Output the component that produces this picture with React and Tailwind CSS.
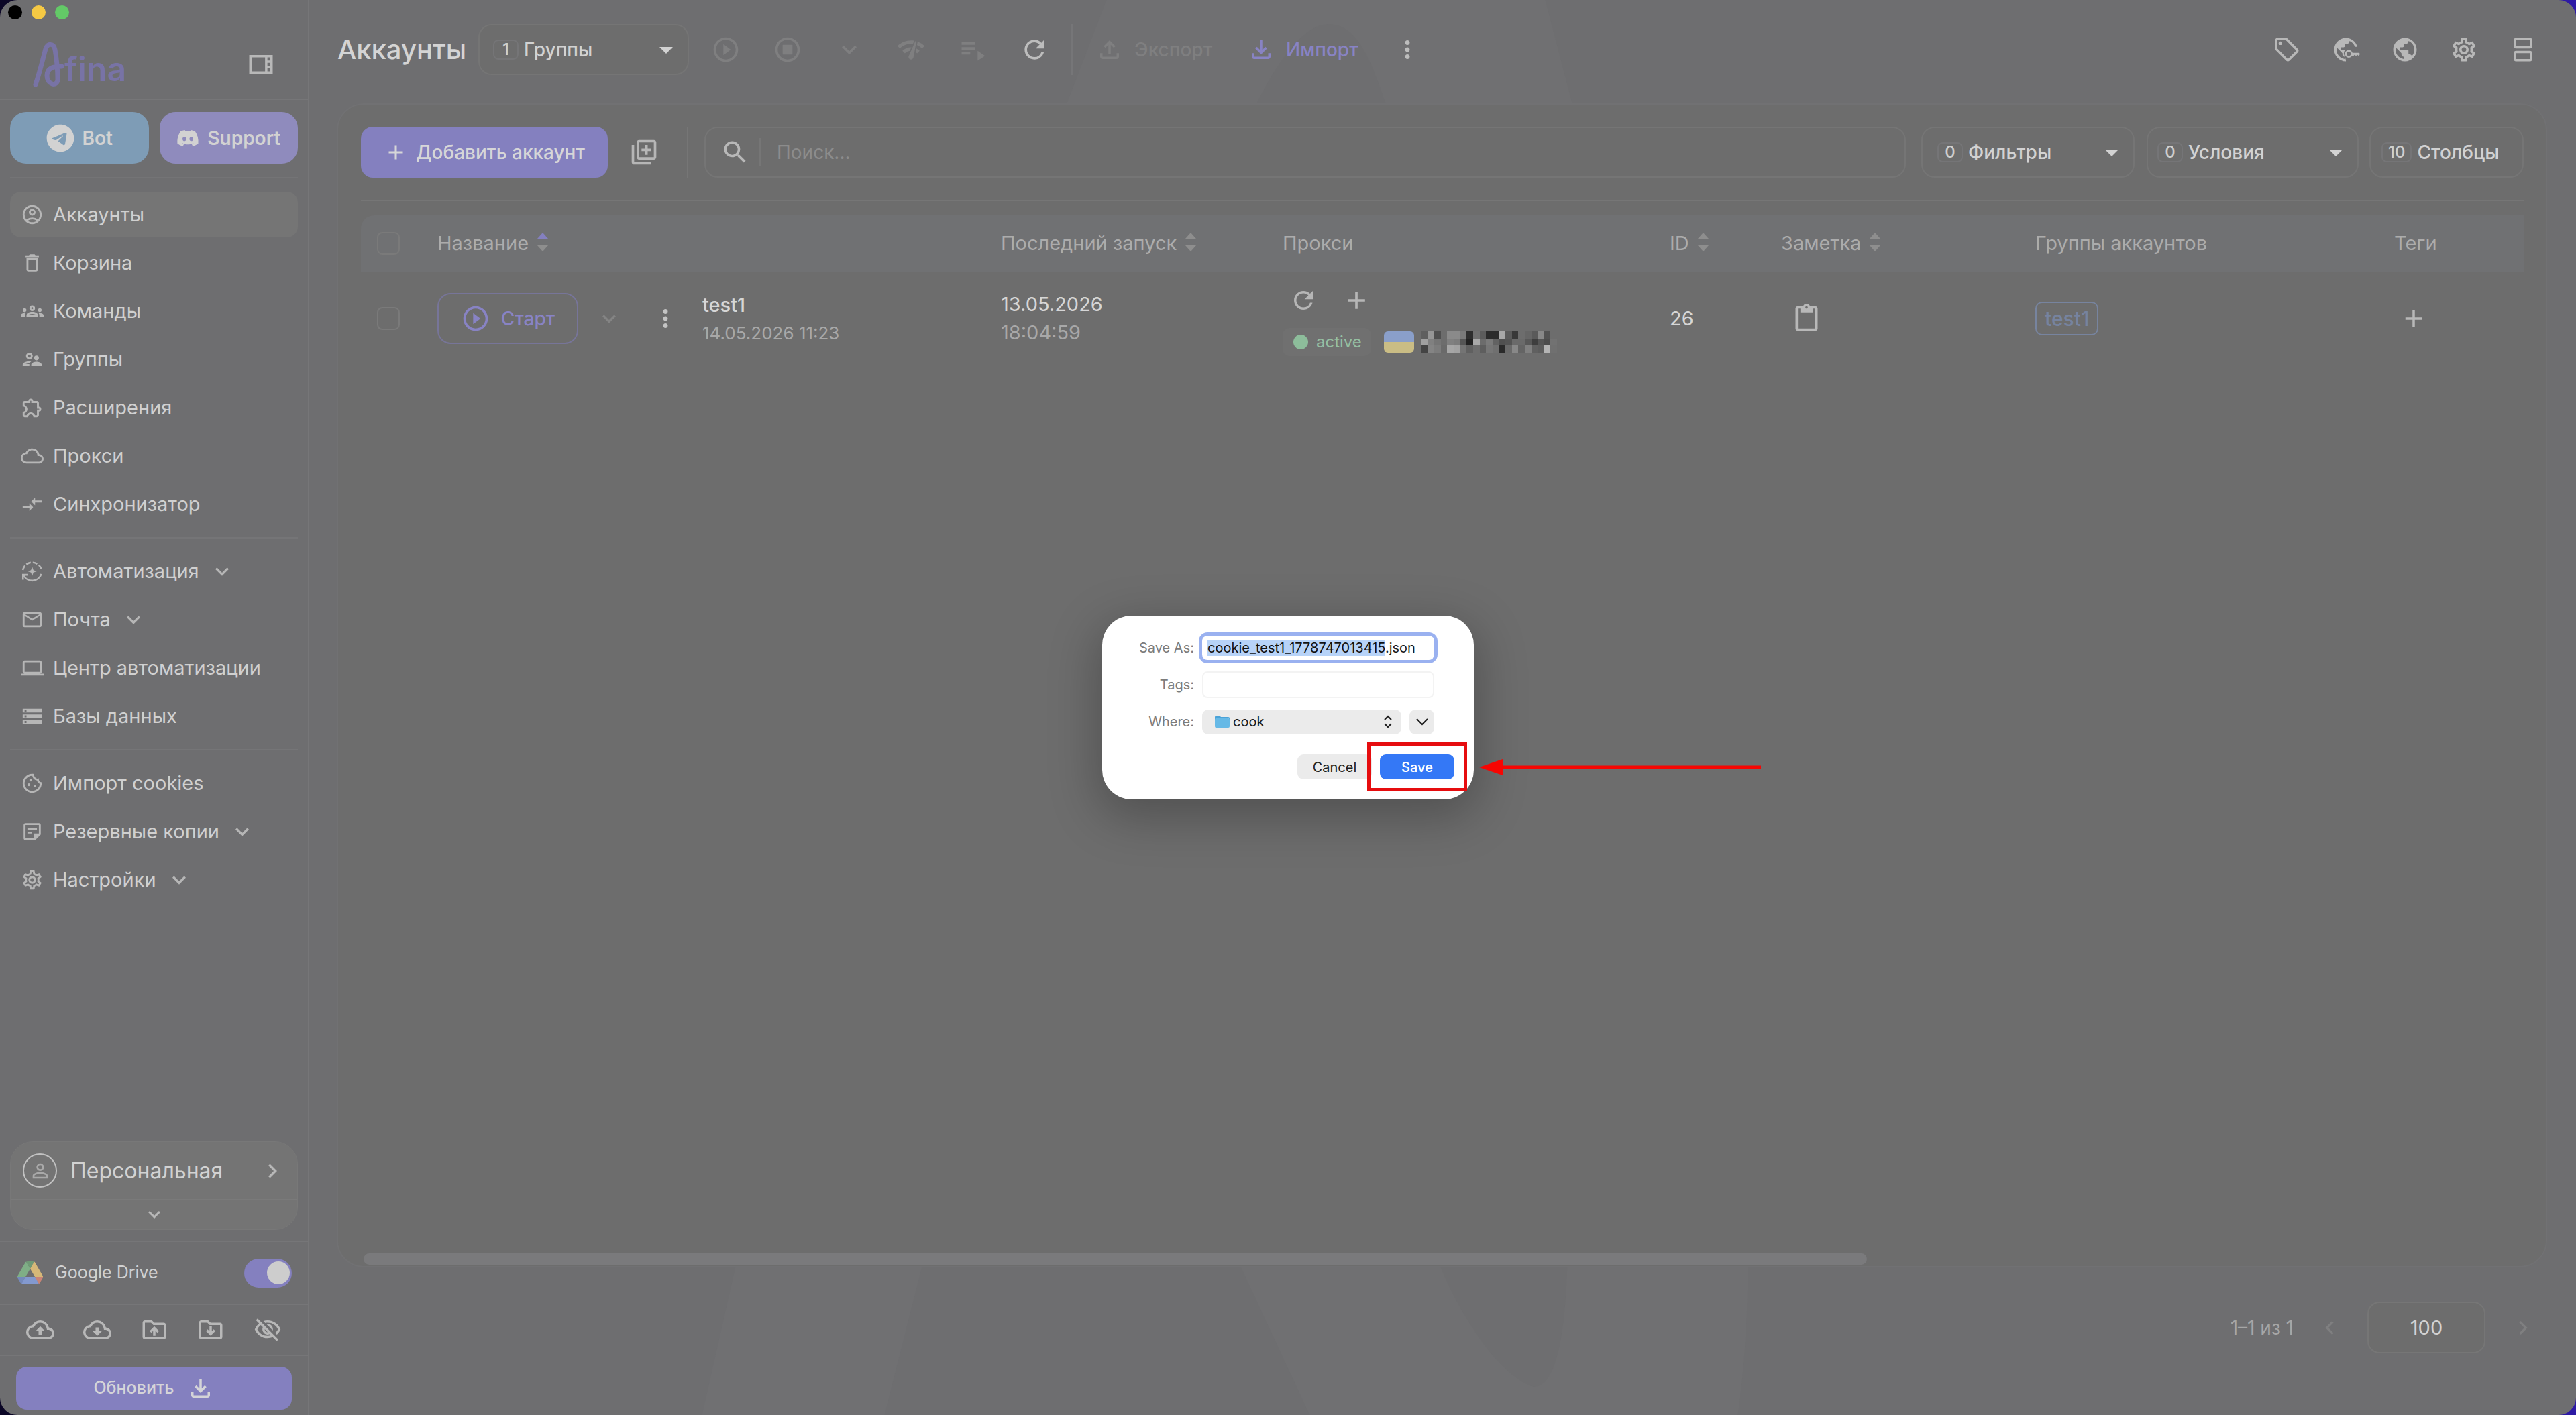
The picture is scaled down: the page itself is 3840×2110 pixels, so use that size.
import React, { useEffect, useRef } from "react";
import {
  MdOutlineAccountCircle, MdDeleteOutline, MdOutlineGroups, MdOutlineSupervisorAccount, MdOutlineExtension,
  MdCloudQueue, MdOutlineCompareArrows, MdMailOutline, MdOutlineLaptop, MdStorage, MdOutlineCookie,
  MdOutlineStickyNote2, MdOutlineSettings, MdOutlineCloudUpload, MdOutlineCloudDownload,
  MdOutlineDriveFolderUpload, MdOutlineVisibilityOff, MdPublic, MdOutlineSell, MdOutlineSplitscreen,
  MdPlayCircleOutline, MdOutlineStopCircle, MdNetworkCheck, MdPlaylistPlay, MdRefresh, MdMoreVert,
  MdOutlineLibraryAdd, MdSearch, MdAdd, MdContentPaste, MdExpandMore, MdKeyboardArrowRight,
  MdKeyboardArrowLeft, MdOutlineFileUpload, MdOutlineFileDownload, MdPersonOutline,
  MdOutlineViewSidebar, MdArrowDropDown,
} from "react-icons/md";
import { FaTelegram, FaDiscord } from "react-icons/fa6";

function AutomationIcon({ size }) {
  return (
    <svg width={size} height={size} viewBox="0 0 24 24" fill="none" stroke="currentColor" strokeWidth="1.8" aria-hidden="true">
      <path d="M2.2 10.6A10 10 0 0 1 21.8 10.6" strokeDasharray="5 2.1" />
      <path d="M21.6 14.8A10 10 0 0 1 3 16" />
      <path d="M7.4 15.6H2.3v5.2" />
      <path d="M12 7.2l1.3 3.5 3.5 1.3-3.5 1.3L12 16.8l-1.3-3.5L7.2 12l3.5-1.3z" fill="currentColor" stroke="none" />
    </svg>
  );
}

function FolderDownIcon({ size }) {
  return (
    <svg width={size} height={size} viewBox="0 0 24 24" fill="currentColor" aria-hidden="true">
      <path d="M20 6h-8l-2-2H4c-1.1 0-1.99.9-1.99 2L2 18c0 1.1.9 2 2 2h16c1.1 0 2-.9 2-2V8c0-1.1-.9-2-2-2zm0 12H4V6h5.17l2 2H20v10z" />
      <path d="M16 13l-1.41-1.41L13 13.17V9h-2v4.17l-1.59-1.58L8 13l4 4z" />
    </svg>
  );
}

function GlobeKeyIcon({ size }) {
  return (
    <svg width={size} height={size} viewBox="0 0 24 24" fill="currentColor" overflow="visible" aria-hidden="true">
      <mask id="globe-cut">
        <rect width="26" height="24" fill="#fff" />
        <path d="M12 24v-3.2L10.2 15.6a4.6 4.6 0 0 1 3-4.4L18.6 9.6H26V24z" fill="#000" />
      </mask>
      <path mask="url(#globe-cut)" d="M12 2C6.48 2 2 6.48 2 12s4.48 10 10 10 10-4.48 10-10S17.52 2 12 2zm-1 17.93c-3.95-.49-7-3.85-7-7.93 0-.62.08-1.21.21-1.79L9 15v1c0 1.1.9 2 2 2v1.93zm6.9-2.54c-.26-.81-1-1.39-1.9-1.39h-1v-3c0-.55-.45-1-1-1H8v-2h2c.55 0 1-.45 1-1V7h2c1.1 0 2-.9 2-2v-.41c2.93 1.19 5 4.06 5 7.41 0 2.08-.8 3.97-2.1 5.39z" />
      <circle cx="14.4" cy="15.6" r="2.5" fill="none" stroke="currentColor" strokeWidth="1.5" />
      <path d="M17 14.7h6.2l.9 1-1.3 1.6-1.1-1-1.1 1.1-1.1-1.1-.9.9H17z" />
    </svg>
  );
}

function DriveIcon() {
  return (
    <svg className="w-[38px]" viewBox="0 0 87.3 78" aria-hidden="true">
      <path fill="#7489bb" d="m6.6 66.85 3.85 6.65c.8 1.4 1.95 2.5 3.3 3.3l13.75-23.8h-27.5c0 1.55.4 3.1 1.2 4.5z" />
      <path fill="#7fae86" d="m43.65 25-13.75-23.8c-1.35.8-2.5 1.9-3.3 3.3l-25.4 44a9.06 9.06 0 0 0 -1.2 4.5h27.5z" />
      <path fill="#c98476" d="m73.55 76.8c1.35-.8 2.5-1.9 3.3-3.3l1.6-2.75 7.65-13.25c.8-1.4 1.2-2.95 1.2-4.5h-27.502l5.852 11.5z" />
      <path fill="#6f9a76" d="m43.65 25 13.75-23.8c-1.35-.8-2.9-1.2-4.5-1.2h-18.5c-1.6 0-3.15.45-4.5 1.2z" />
      <path fill="#8399cf" d="m59.8 53h-32.3l-13.75 23.8c1.35.8 2.9 1.2 4.5 1.2h50.8c1.6 0 3.15-.45 4.5-1.2z" />
      <path fill="#d6b878" d="m73.4 26.5-12.7-22c-.8-1.4-1.95-2.5-3.3-3.3l-13.75 23.8 16.15 28h27.45c0-1.55-.4-3.1-1.2-4.5z" />
    </svg>
  );
}

function FolderIcon() {
  return (
    <svg className="w-6" viewBox="0 0 24 20" aria-hidden="true">
      <path d="M1 3a2 2 0 0 1 2-2h5l2 2h11a2 2 0 0 1 2 2v3H1z" fill="#4ba3d8" />
      <rect x="2" y="4" width="20" height="3" fill="#d9f0fb" />
      <rect x="1" y="5" width="22" height="14" rx="2" fill="#66b9e6" />
    </svg>
  );
}

const navGroups = [
  [
    { label: "Аккаунты", Icon: MdOutlineAccountCircle, active: true },
    { label: "Корзина", Icon: MdDeleteOutline },
    { label: "Команды", Icon: MdOutlineGroups },
    { label: "Группы", Icon: MdOutlineSupervisorAccount },
    { label: "Расширения", Icon: MdOutlineExtension },
    { label: "Прокси", Icon: MdCloudQueue },
    { label: "Синхронизатор", Icon: MdOutlineCompareArrows },
  ],
  [
    { label: "Автоматизация", Icon: AutomationIcon, more: true },
    { label: "Почта", Icon: MdMailOutline, more: true },
    { label: "Центр автоматизации", Icon: MdOutlineLaptop },
    { label: "Базы данных", Icon: MdStorage },
  ],
  [
    { label: "Импорт cookies", Icon: MdOutlineCookie },
    { label: "Резервные копии", Icon: MdOutlineStickyNote2, more: true },
    { label: "Настройки", Icon: MdOutlineSettings, more: true },
  ],
];

function Sidebar() {
  return (
    <aside className="flex w-[461px] shrink-0 flex-col border-r-2 border-[#767678]">
      <div className="flex gap-3.5 px-3 pt-2">
        <span className="size-[21px] rounded-full bg-black" />
        <span className="size-[21px] rounded-full bg-[#f5c944]" />
        <span className="size-[21px] rounded-full bg-[#63c967]" />
      </div>
      <div className="flex h-[120px] items-center justify-between border-b-2 border-[#767678] pt-4 pr-[49px] pl-12">
        <a href="#" aria-label="Afina" className="flex items-end text-[#7873a6]">
          <svg className="h-[70px] w-12" viewBox="0 0 48 70" fill="none" stroke="currentColor" strokeWidth="7" strokeLinecap="round" strokeLinejoin="round" aria-hidden="true">
            <path d="M5 65C11 48 16 26 20 12C23 3 32 3 34 13C37 30 38 46 38 58C37 69 22 65 22 52C22 40 32 38 44 38" />
          </svg>
          <span className="text-[50px] leading-[56px] font-semibold">fina</span>
        </a>
        <button aria-label="Свернуть меню" className="text-[#b8b8b8]"><MdOutlineViewSidebar size={42} /></button>
      </div>
      <div className="mx-[15px] grid grid-cols-2 gap-4 border-b-2 border-[#747476] pt-[18px] pb-5 text-[28px] font-semibold text-[#d2d2d2]">
        <a href="#" className="flex h-[77px] items-center justify-center gap-3 rounded-[24px] bg-[#7e9cb6]">
          <FaTelegram size={42} />Bot
        </a>
        <a href="#" className="flex h-[77px] items-center justify-center gap-3 rounded-[24px] bg-[#8f8bbd]">
          <FaDiscord size={34} />Support
        </a>
      </div>
      <nav className="mx-[15px] mt-5 flex flex-col">
        {navGroups.map((group, i) => (
          <div key={i} className="mb-[15px] flex flex-col gap-1 border-[#757577] not-first:border-t-2 not-first:pt-[15px]">
            {group.map(({ label, Icon, active, more }) => (
              <a key={label} href="#" className={"flex h-[68px] items-center gap-3.5 rounded-[16px] pl-4 text-[29px] text-[#d0d0d0] " + (active ? "bg-[#757575]" : "")}>
                <span className="text-[#b6b6b6]"><Icon size={34} /></span>
                {label}
                {more && <MdExpandMore size={40} className="text-[#b6b6b6]" />}
              </a>
            ))}
          </div>
        ))}
      </nav>
      <div className="mx-[15px] mt-auto mb-4 rounded-[34px] border border-[#787878] bg-[#747474]">
        <button className="flex h-[86px] w-full items-center gap-5 border-b border-[#7a7a7a] pr-4 pl-[18px] text-[32px] text-[#d2d2d2]">
          <span className="grid size-[51px] place-items-center rounded-full border-2 border-[#c2c2c2] text-[#a9a9a9]"><MdPersonOutline size={34} /></span>
          Персональная
          <MdKeyboardArrowRight size={42} className="ml-auto text-[#b8b8b8]" />
        </button>
        <button aria-label="Показать ещё" className="grid h-[44px] w-full place-items-center text-[#b8b8b8]"><MdExpandMore size={36} /></button>
      </div>
      <label className="flex h-[94px] items-center gap-[18px] border-t-2 border-[#767678] pr-6 pl-[26px] text-[25px] text-[#d0d0d0]">
        <DriveIcon />
        Google Drive
        <input type="checkbox" defaultChecked className="peer sr-only" />
        <span className="ml-auto flex h-[43px] w-[71px] items-center justify-end rounded-full bg-[#8480bf] pr-[3px]">
          <span className="size-[34px] rounded-full bg-[#cdcdcd]" />
        </span>
      </label>
      <div className="flex h-[78px] items-center justify-between border-y-2 border-[#767678] px-[39px] text-[#b8b8b8]">
        <button aria-label="Загрузить в облако"><MdOutlineCloudUpload size={42} /></button>
        <button aria-label="Скачать из облака"><MdOutlineCloudDownload size={42} /></button>
        <button aria-label="Загрузить папку"><MdOutlineDriveFolderUpload size={42} /></button>
        <button aria-label="Скачать папку"><FolderDownIcon size={42} /></button>
        <button aria-label="Скрыть"><MdOutlineVisibilityOff size={42} /></button>
      </div>
      <button className="mx-6 mt-4 mb-2 flex h-[64px] items-center justify-center gap-[18px] rounded-[16px] bg-[#8480bf] text-[25px] font-medium text-[#d4d4d8]">
        Обновить<MdOutlineFileDownload size={42} />
      </button>
    </aside>
  );
}

function Badge({ children }) {
  return <span className="grid h-[30px] min-w-[38px] place-items-center rounded-[8px] border-2 border-[#757577] px-2 text-[24px] leading-none text-[#cfcfcf]">{children}</span>;
}

function Picker({ count, label, className }) {
  return (
    <label className={"relative flex h-[76px] items-center gap-2 rounded-[20px] border-2 border-[#757575] bg-[#6d6d6d] pr-2 text-[28px] font-medium text-[#d2d2d2] " + className}>
      <Badge>{count}</Badge>
      <select aria-label={label} className="min-w-0 flex-1 appearance-none bg-transparent outline-none">
        <option>{label}</option>
      </select>
      <MdArrowDropDown size={48} className="pointer-events-none" />
    </label>
  );
}

function TopBar() {
  return (
    <header className="relative flex items-center px-[42px] pt-9 pb-[42px] text-[28px] font-medium">
      <h1 className="mr-[18px] text-[40px] leading-none font-medium text-[#d4d4d4]">Аккаунты</h1>
      <Picker count="1" label="Группы" className="w-[314px] pl-5" />
      <div className="mx-[33px] flex gap-12 text-[#7f7f80]">
        <button aria-label="Запустить"><MdPlayCircleOutline size={44} /></button>
        <button aria-label="Остановить"><MdOutlineStopCircle size={44} /></button>
        <button aria-label="Ещё"><MdExpandMore size={44} /></button>
        <button aria-label="Проверить прокси"><MdNetworkCheck size={44} /></button>
        <button aria-label="Очередь"><MdPlaylistPlay size={44} /></button>
        <button aria-label="Обновить" className="text-[#bdbdbd]"><MdRefresh size={44} /></button>
      </div>
      <span className="h-[76px] w-0.5 bg-[#767678]" />
      <button className="ml-[34px] flex items-center gap-4 text-[#7f7f80]"><MdOutlineFileUpload size={42} />Экспорт</button>
      <button className="ml-[52px] flex items-center gap-4 text-[#8883c4]"><MdOutlineFileDownload size={42} />Импорт</button>
      <button aria-label="Меню" className="ml-[52px] text-[#bdbdbd]"><MdMoreVert size={42} /></button>
      <div className="mr-[16px] ml-auto flex gap-[46px] text-[#b8b8b8]">
        <button aria-label="Теги"><MdOutlineSell size={42} /></button>
        <button aria-label="Ключ"><GlobeKeyIcon size={42} /></button>
        <button aria-label="Язык"><MdPublic size={42} /></button>
        <button aria-label="Настройки"><MdOutlineSettings size={42} /></button>
        <button aria-label="Вид"><MdOutlineSplitscreen size={42} /></button>
      </div>
    </header>
  );
}

function Toolbar() {
  return (
    <div className="flex items-center border-b-2 border-[#767676] pb-[33px]">
      <button className="flex h-[76px] w-[368px] items-center justify-center gap-3 rounded-[18px] bg-[#8480bf] text-[28px] font-medium text-[#d6d6d8]">
        <MdAdd size={36} />Добавить аккаунт
      </button>
      <button aria-label="Добавить несколько" className="ml-8 text-[#b6b6b6]"><MdOutlineLibraryAdd size={44} /></button>
      <span className="mx-[42px] mr-6 h-[76px] w-0.5 bg-[#767676]" />
      <label className="flex h-[76px] flex-1 items-center rounded-[20px] border-2 border-[#757575] pl-[22px] text-[28px]">
        <MdSearch size={44} className="text-[#b8b8b8]" />
        <span className="mr-6 ml-3.5 h-[42px] w-0.5 bg-[#767676]" />
        <input type="search" aria-label="Поиск" placeholder="Поиск..." className="min-w-0 flex-1 bg-transparent outline-none placeholder:text-[#8c8c8c]" />
      </label>
      <Picker count="0" label="Фильтры" className="ml-[23px] w-[318px] pl-[22px]" />
      <Picker count="0" label="Условия" className="ml-[18px] w-[316px] pl-3.5" />
      <button className="ml-[16px] flex h-[76px] w-[230px] items-center gap-2 rounded-[20px] border-2 border-[#757575] pl-4 text-[28px] font-medium text-[#d2d2d2]">
        <Badge>10</Badge>Столбцы
      </button>
    </div>
  );
}

function Sort({ up }) {
  return (
    <svg className="mb-1 w-[18px]" viewBox="0 0 18 28" fill="#8e8e8e" aria-hidden="true">
      <path d="M9 0l8 9H1z" fill={up ? "#8480bf" : "#8e8e8e"} />
      <path d="M9 28l8-9H1z" />
    </svg>
  );
}

const columns = [
  { label: "Название", sort: true, up: true },
  { label: "Последний запуск", sort: true },
  { label: "Прокси" },
  { label: "ID", sort: true },
  { label: "Заметка", sort: true },
  { label: "Группы аккаунтов" },
  { label: "Теги" },
];

const mosaic = [
  "5f 96 4f 6d 8a 8a 7a 2e 70 5c 2b 2b a8 5a 38 6d 66 5a 88 52 6d",
  "a0 80 75 6d 80 7c 55 22 a8 6c 7a 62 50 54 6a 6a 58 3e 55 4c 72",
  "44 84 7c 6a a6 a2 74 60 6d 5e 76 70 2a 6a 88 64 80 60 5c b4 70",
].map((row) => row.split(" "));

function Checkbox({ label }) {
  return <input type="checkbox" aria-label={label} className="block size-[34px] appearance-none rounded-[8px] border-2 border-[#7a7a7a]" />;
}

function AccountsTable() {
  return (
    <table className="mt-[21px] w-full table-fixed text-left text-[29px]">
      <colgroup>
        <col className="w-[114px]" />
        <col className="w-[840px]" />
        <col className="w-[420px]" />
        <col className="w-[577px]" />
        <col className="w-[166px]" />
        <col className="w-[379px]" />
        <col className="w-[535px]" />
        <col />
      </colgroup>
      <thead>
        <tr className="h-[84px] text-[#acacac]">
          <th className="rounded-tl-[20px] bg-[#707173] pl-6"><Checkbox label="Выбрать все" /></th>
          {columns.map(({ label, sort, up }) => (
            <th key={label} className="bg-[#707173] font-normal">
              <span className="flex items-center gap-3">{label}{sort && <Sort up={up} />}</span>
            </th>
          ))}
        </tr>
      </thead>
      <tbody>
        <tr className="h-[140px] text-[#d6d6d6]">
          <td className="pl-6"><Checkbox label="Выбрать test1" /></td>
          <td>
            <div className="flex items-center">
              <button className="flex h-[76px] w-[210px] items-center justify-center gap-4 rounded-[20px] border-2 border-[#777599] text-[28px] font-medium text-[#8883c4]">
                <MdPlayCircleOutline size={44} />Старт
              </button>
              <button aria-label="Варианты запуска" className="ml-[26px] text-[#848484]"><MdExpandMore size={40} /></button>
              <button aria-label="Меню" className="mr-[34px] ml-[43px] text-[#c4c4c4]"><MdMoreVert size={42} /></button>
              <div>
                <p className="leading-[44px] font-medium">test1</p>
                <p className="text-[26px] leading-[40px] text-[#a8a8a8]">14.05.2026 11:23</p>
              </div>
            </div>
          </td>
          <td>
            <p className="leading-[42px]">13.05.2026</p>
            <p className="leading-[42px] text-[#a8a8a8]">18:04:59</p>
          </td>
          <td className="pt-1.5">
            <div className="flex gap-9 pl-[10px] text-[#b6b6b6]">
              <button aria-label="Проверить"><MdRefresh size={42} /></button>
              <button aria-label="Добавить прокси"><MdAdd size={44} /></button>
            </div>
            <div className="mt-[19px] flex items-center">
              <span className="flex h-[42px] w-[132px] items-center gap-3 rounded-[10px] bg-[#707070] pl-4 text-[24px] text-[#95bfa2]">
                <span className="size-[22px] rounded-full bg-[#8dbd9b]" />active
              </span>
              <span className="ml-[19px] flex h-8 w-[45px] flex-col overflow-hidden rounded-[6px]">
                <span className="flex-1 bg-[#8a9fca]" />
                <span className="flex-1 bg-[#cabd85]" />
              </span>
              <svg className="ml-[11px] h-8 w-[202px]" viewBox="0 0 21 3" preserveAspectRatio="none" shapeRendering="crispEdges" aria-hidden="true">
                {mosaic.map((row, y) => row.map((c, x) => <rect key={x + "-" + y} x={x} y={y} width="1" height="1" fill={"#" + c + c + c} />))}
              </svg>
            </div>
          </td>
          <td>26</td>
          <td className="pl-4"><button aria-label="Заметка" className="block text-[#b8b8b8]"><MdContentPaste size={44} /></button></td>
          <td><span className="inline-flex h-[50px] items-center rounded-[10px] border-2 border-[#77849f] px-3 text-[30px] font-medium text-[#76839f]">test1</span></td>
          <td className="pl-2"><button aria-label="Добавить тег" className="block text-[#b8b8b8]"><MdAdd size={42} /></button></td>
        </tr>
      </tbody>
    </table>
  );
}

function Watermark() {
  return (
    <svg className="absolute inset-0 size-full" viewBox="460 0 3380 2110" preserveAspectRatio="xMidYMid slice" fill="#707072" aria-hidden="true">
      <path fillRule="evenodd" d="M1649 0H2303L2343 154H1590zM1873 154C1900 100 1940 36 1980 36S2040 80 2065 154z" />
      <path d="M1098 1880H1376L1318 2110H1046z" />
      <path fillRule="evenodd" d="M1845 1880L1952 2110H2590C2600 2040 2605 1960 2605 1880zM2143 1880C2170 1950 2230 2050 2285 2068C2325 2070 2334 1960 2336 1880z" />
    </svg>
  );
}

const fileName = "cookie_test1_1778747013415";

function SaveDialog() {
  const nameRef = useRef(null);
  useEffect(() => {
    nameRef.current.focus();
    nameRef.current.setSelectionRange(0, fileName.length);
  }, []);
  return (
    <div className="absolute inset-0 grid place-items-center">
      <form role="dialog" aria-label="Save" onSubmit={(e) => e.preventDefault()} className="relative w-[554px] rounded-[44px] bg-white pt-7 pb-[30px] text-[20px] text-[#1c1c1c] shadow-[0_20px_70px_8px_rgba(0,0,0,0.25)]">
        <div className="grid auto-rows-[40px] grid-cols-[137px_1fr] items-center gap-x-3 gap-y-[15px] pr-[59px] text-[#7c7c7c]">
          <label htmlFor="save-name" className="text-right">Save As:</label>
          <input id="save-name" ref={nameRef} defaultValue={fileName + ".json"} className="h-[36px] w-full rounded-[8px] bg-white px-2 text-[#1c1c1c] ring-5 ring-[#9ab1f0] outline-none selection:bg-[#b7d3f8] selection:text-[#111111]" />
          <label htmlFor="save-tags" className="text-right">Tags:</label>
          <input id="save-tags" className="h-full w-full rounded-[8px] border-2 border-[#f3f3f3] px-2 outline-none" />
          <label htmlFor="save-where" className="text-right">Where:</label>
          <div className="flex gap-3">
            <div className="relative flex h-[37px] flex-1 items-center rounded-[9px] bg-[#ebebeb] pl-[18px]">
              <FolderIcon />
              <select id="save-where" className="min-w-0 flex-1 appearance-none bg-transparent pl-1 text-[#1c1c1c] outline-none">
                <option>cook</option>
              </select>
              <svg className="mr-3 w-4" viewBox="0 0 16 20" fill="none" stroke="#1c1c1c" strokeWidth="2" aria-hidden="true">
                <path d="M3 7l5-5 5 5M3 13l5 5 5-5" />
              </svg>
            </div>
            <button type="button" aria-label="Развернуть" className="grid size-[37px] place-items-center rounded-[9px] bg-[#ebebeb]">
              <svg className="w-5" viewBox="0 0 20 12" fill="none" stroke="#1c1c1c" strokeWidth="2" aria-hidden="true"><path d="M2 2l8 8 8-8" /></svg>
            </button>
          </div>
        </div>
        <div className="mt-[29px] flex justify-end gap-3 pr-[29px]">
          <button type="button" className="h-[37px] w-[111px] rounded-[9px] bg-[#ebebeb]">Cancel</button>
          <button type="submit" className="relative h-[37px] w-[111px] rounded-[9px] bg-[#3478f6] font-medium text-white">
            Save
            <span className="absolute -inset-x-[19px] -inset-y-[18px] border-5 border-[#e60d0f]" />
            <svg className="absolute top-[7px] left-[148px] h-6 w-[420px]" viewBox="0 0 420 24" fill="#f70502" aria-hidden="true">
              <path d="M0 12L35 0v9.500H420v5H35V24z" />
            </svg>
          </button>
        </div>
      </form>
    </div>
  );
}

export default function App() {
  return (
    <div className="h-screen bg-linear-to-r from-[#0b0626] to-[#2d1aa5] font-[Inter,sans-serif]">
      <div className="relative flex h-full overflow-hidden rounded-[26px] bg-[#6e6e70]">
        <Sidebar />
        <main className="relative flex min-w-0 flex-1 flex-col">
          <Watermark />
          <TopBar />
          <section className="relative mr-[43px] ml-[41px] flex min-h-0 flex-1 flex-col rounded-[40px] border-2 border-[#717173] bg-[#6d6d6d] pt-[33px] pr-[33px] pl-[34px]">
            <Toolbar />
            <AccountsTable />
            <div className="mt-auto mb-0.5 ml-1 h-[17px] w-[69.5%] rounded-full bg-[#7a7a7c]" />
          </section>
          <footer className="relative flex items-center justify-end pt-[51px] pr-[59px] pb-[92px] text-[28px]">
            <span className="mr-[34px] text-[#a6a6a6]">1–1 из 1</span>
            <button aria-label="Предыдущая страница" className="text-[#7f7f80]"><MdKeyboardArrowLeft size={40} /></button>
            <select aria-label="Строк на странице" className="mx-9 h-[77px] w-[176px] appearance-none rounded-[18px] border-2 border-[#767676] bg-[#6d6d6d] text-center text-[29px] text-[#d2d2d2]">
              <option>100</option>
            </select>
            <button aria-label="Следующая страница" className="text-[#7f7f80]"><MdKeyboardArrowRight size={40} /></button>
          </footer>
        </main>
        <SaveDialog />
      </div>
    </div>
  );
}
